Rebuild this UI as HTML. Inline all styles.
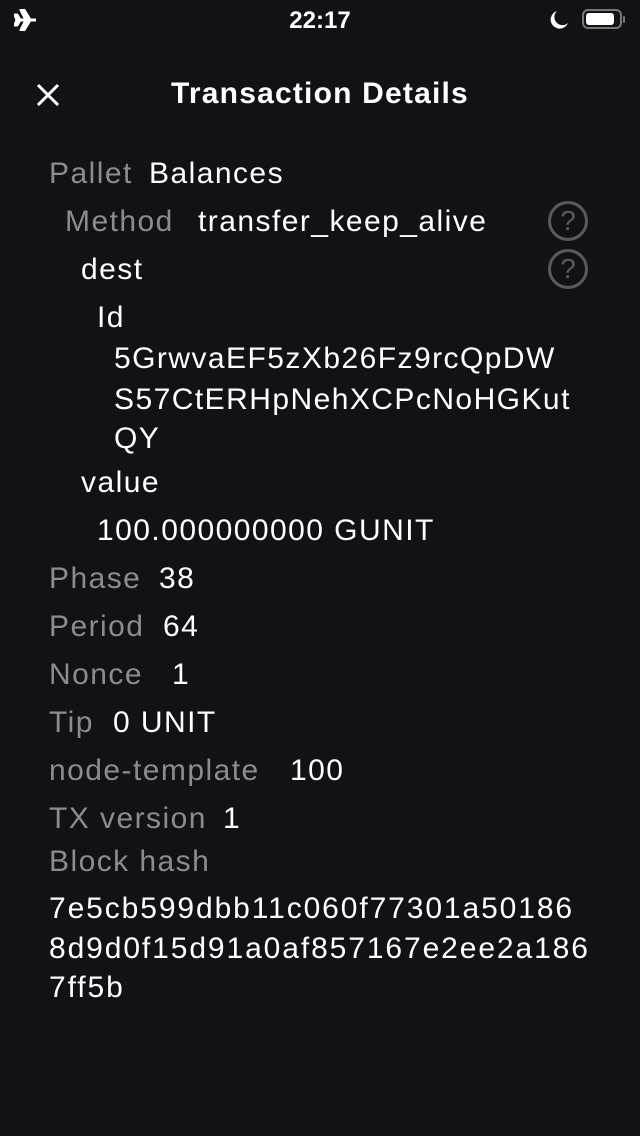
<!DOCTYPE html>
<html><head><meta charset="utf-8"><style>
html,body{margin:0;padding:0;background:#111116;}
body{width:640px;height:1136px;position:relative;overflow:hidden;font-family:"Liberation Sans",sans-serif;color:#fff;}
.t{position:absolute;font-size:30px;line-height:36px;white-space:nowrap;letter-spacing:1.45px;top:0;}
.g{color:#8b8b90;}
.q{position:absolute;left:548px;width:34px;height:34px;border:3px solid #5a5a5e;border-radius:50%;color:#5a5a5e;font-size:28px;line-height:34px;text-align:center;}
</style></head><body>
<svg style="position:absolute;left:14px;top:9px" width="24" height="22" viewBox="0 0 24 22"><path d="M2 11 L22 11 M12 11 L7 1 L10 1 L16 11 L10 21 L7 21 Z M3 11 L1 6 L3 6 L6 11 L3 16 L1 16 Z" stroke="#fff" stroke-width="3" fill="#fff" stroke-linejoin="round"/></svg>
<div class="t" style="left:0;width:640px;text-align:center;top:3px;font-size:24px;font-weight:bold;letter-spacing:0">22:17</div>
<svg style="position:absolute;left:548px;top:9px" width="22" height="22" viewBox="0 0 22 22"><path d="M9 2 A9 9 0 1 0 20 14 A8 8 0 0 1 9 2Z" fill="#fff"/></svg>
<div style="position:absolute;left:582px;top:9px;width:40px;height:20px;border:2px solid #777;border-radius:6px;box-sizing:border-box;"></div>
<div style="position:absolute;left:586px;top:13px;width:28px;height:12px;background:#fff;border-radius:3px;"></div>
<div style="position:absolute;left:623px;top:16px;width:2px;height:7px;background:#777;border-radius:1px;"></div>
<svg style="position:absolute;left:36px;top:83px" width="24" height="24" viewBox="0 0 24 24"><path d="M2 2L22 22M22 2L2 22" stroke="#fff" stroke-width="3"/></svg>
<div class="t" style="left:0;width:640px;text-align:center;top:76px;font-size:30px;font-weight:bold;letter-spacing:1.2px;">Transaction Details</div>

<div class="t g" style="left:49px;top:156px">Pallet</div><div class="t" style="left:149px;top:156px">Balances</div>
<div class="t g" style="left:65px;top:204px">Method</div><div class="t" style="left:198px;top:204px">transfer_keep_alive</div>
<div class="q" style="top:201px">?</div>
<div class="t" style="left:81px;top:252px">dest</div>
<div class="q" style="top:249px">?</div>
<div class="t" style="left:97px;top:300px">Id</div>
<div class="t" style="left:114px;top:341px">5GrwvaEF5zXb26Fz9rcQpDW</div>
<div class="t" style="left:114px;top:382px">S57CtERHpNehXCPcNoHGKut</div>
<div class="t" style="left:114px;top:421px">QY</div>
<div class="t" style="left:81px;top:465px">value</div>
<div class="t" style="left:97px;top:513px">100.000000000 GUNIT</div>
<div class="t g" style="left:49px;top:561px">Phase</div><div class="t" style="left:159px;top:561px">38</div>
<div class="t g" style="left:49px;top:609px">Period</div><div class="t" style="left:163px;top:609px">64</div>
<div class="t g" style="left:49px;top:657px">Nonce</div><div class="t" style="left:172px;top:657px">1</div>
<div class="t g" style="left:49px;top:705px">Tip</div><div class="t" style="left:113px;top:705px">0 UNIT</div>
<div class="t g" style="left:49px;top:753px">node-template</div><div class="t" style="left:290px;top:753px">100</div>
<div class="t g" style="left:49px;top:801px">TX version</div><div class="t" style="left:223px;top:801px">1</div>
<div class="t g" style="left:49px;top:844px">Block hash</div>
<div class="t" style="left:49px;top:891px;letter-spacing:1.9px">7e5cb599dbb11c060f77301a50186</div>
<div class="t" style="left:49px;top:931px;letter-spacing:1.9px">8d9d0f15d91a0af857167e2ee2a186</div>
<div class="t" style="left:49px;top:970px;letter-spacing:1.9px">7ff5b</div>
</body></html>
